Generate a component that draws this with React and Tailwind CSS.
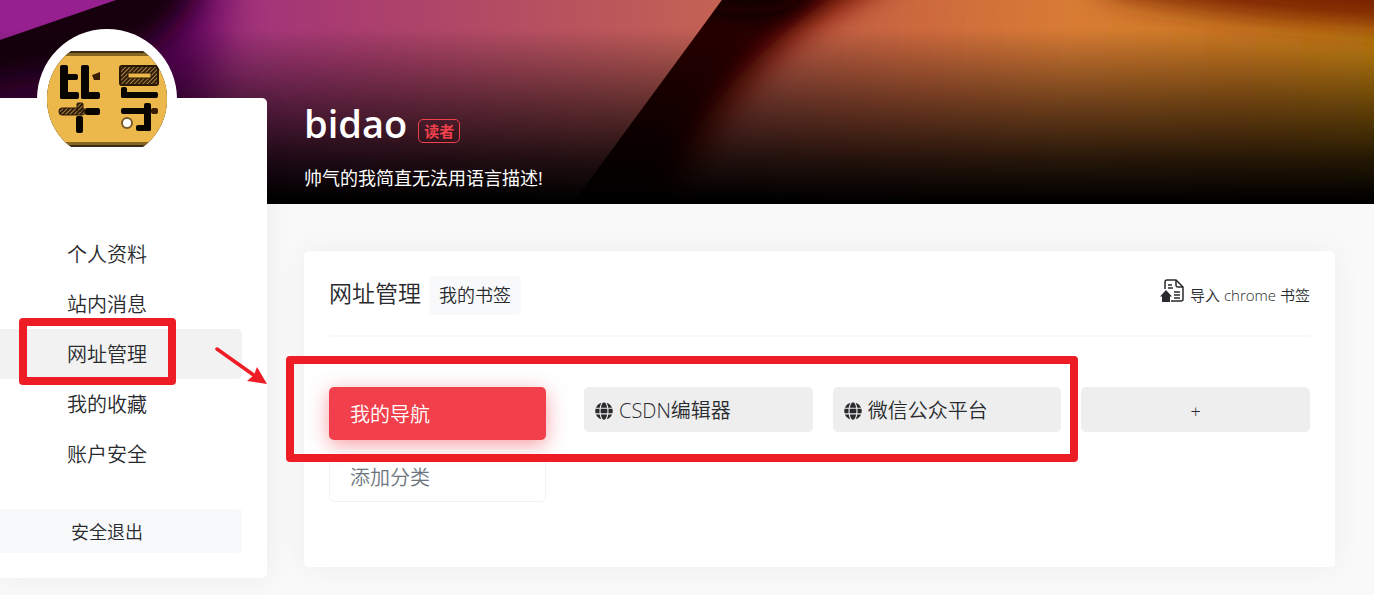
import React, { useState } from 'react';
import { FaGlobe } from 'react-icons/fa';

const menuItems = [
  { id: 'profile', label: '个人资料' },
  { id: 'messages', label: '站内消息' },
  { id: 'sites', label: '网址管理' },
  { id: 'favorites', label: '我的收藏' },
  { id: 'security', label: '账户安全' },
];

const sites = [
  { id: 1, name: 'CSDN编辑器' },
  { id: 2, name: '微信公众平台' },
];

const BannerArt = () => (
  <svg className="absolute inset-0 h-full w-full" viewBox="0 0 1374 204" preserveAspectRatio="none" aria-hidden="true">
    <defs>
      <linearGradient id="pink" gradientUnits="userSpaceOnUse" x1="200" y1="0" x2="720" y2="0">
        <stop offset="0" stopColor="#a03080" />
        <stop offset="0.3" stopColor="#aa3d6e" />
        <stop offset="0.65" stopColor="#b65060" />
        <stop offset="1" stopColor="#c46253" />
      </linearGradient>
      <linearGradient id="orange" gradientUnits="userSpaceOnUse" x1="760" y1="0" x2="1374" y2="60">
        <stop offset="0" stopColor="#b65848" />
        <stop offset="0.25" stopColor="#cc683e" />
        <stop offset="0.5" stopColor="#d87c34" />
        <stop offset="0.8" stopColor="#cc7a20" />
        <stop offset="1" stopColor="#c88410" />
      </linearGradient>
      <linearGradient id="fade" x1="0" y1="0" x2="0" y2="1">
        <stop offset="0.14" stopColor="#000" stopOpacity="0" />
        <stop offset="0.5" stopColor="#000" stopOpacity="0.48" />
        <stop offset="0.78" stopColor="#000" stopOpacity="0.82" />
        <stop offset="0.98" stopColor="#000" stopOpacity="1" />
      </linearGradient>
      <filter id="soft" x="-50%" y="-50%" width="200%" height="200%">
        <feGaussianBlur stdDeviation="14" />
      </filter>
      <filter id="softer" x="-50%" y="-50%" width="200%" height="200%">
        <feGaussianBlur stdDeviation="24" />
      </filter>
      <clipPath id="right">
        <polygon points="722,0 1374,0 1374,204 572,204" />
      </clipPath>
    </defs>
    <rect width="1374" height="204" fill="url(#pink)" />
    <path d="M-80 -60H225C220 20 215 60 200 110L170 240H-80Z" fill="#5c0058" filter="url(#softer)" />
    <path d="M-60 -60H205C195 20 165 45 100 70L-60 90Z" fill="#180008" filter="url(#soft)" />
    <polygon points="0,0 116,0 0,40" fill="#962090" />
    <g clipPath="url(#right)">
      <rect x="560" width="820" height="204" fill="#280000" />
      <path d="M900 -60C830 15 700 50 640 260H1450V-60Z" fill="#7a0800" filter="url(#soft)" />
      <path d="M960 -60C850 12 725 35 670 260H1450V-60Z" fill="url(#orange)" filter="url(#soft)" />
      <ellipse cx="750" cy="-8" rx="55" ry="22" fill="#080000" filter="url(#soft)" />
      <path d="M1060 -60L1110 -8C1200 14 1300 22 1420 30V-60Z" fill="#7a2400" filter="url(#soft)" />
    </g>
    <rect width="1374" height="204" fill="url(#fade)" />
  </svg>
);

const AvatarArt = () => (
  <svg className="h-[120px] w-[120px] rounded-full" viewBox="0 0 120 120" role="img" aria-label="bidao">
    <defs>
      <pattern id="hatch" width="3" height="3" patternUnits="userSpaceOnUse" patternTransform="rotate(45)">
        <rect width="3" height="3" fill="#2e1c08" />
        <rect width="1" height="3" fill="#a98142" />
      </pattern>
    </defs>
    <rect width="120" height="120" fill="#fff" />
    <rect y="12" width="120" height="96" fill="#3a2a18" />
    <rect y="14" width="120" height="92" fill="#86651f" />
    <rect y="17" width="120" height="86" fill="#ecb84c" />
    <g fill="#080400">
      <rect x="13" y="26" width="8" height="34" rx="2" />
      <rect x="13" y="53" width="19" height="7" rx="2" />
      <rect x="18" y="35" width="13" height="6" rx="2" />
      <rect x="34" y="26" width="8" height="34" rx="2" />
      <rect x="34" y="53" width="19" height="7" rx="2" />
      <path d="M45 36L48 35L53 33V41H47Z" fill="#3a1c06" />
      <rect x="38" y="69" width="15" height="7" rx="2" />
      <rect x="29" y="77" width="7" height="17" rx="2" />
      <rect x="74" y="48" width="6" height="11" rx="2" />
      <rect x="74" y="53" width="37" height="6" rx="2" />
      <rect x="74" y="69" width="30" height="6" rx="2" />
      <rect x="104" y="69" width="7" height="6" rx="2" fill="#3a1c06" />
      <rect x="97" y="64" width="7" height="28" rx="2" />
      <rect x="89" y="86" width="15" height="6" rx="2" />
    </g>
    <rect x="12" y="69" width="26" height="7" rx="3" fill="url(#hatch)" stroke="#2a1806" />
    <rect x="30" y="64" width="6" height="8" rx="1" fill="url(#hatch)" stroke="#2a1806" />
    <rect x="73" y="27" width="38" height="19" rx="2" fill="url(#hatch)" stroke="#2a1806" strokeWidth="2" />
    <rect x="81" y="34" width="23" height="5" fill="#ecb84c" stroke="#2a1806" />
    <circle cx="80" cy="84" r="5" fill="#fff" stroke="#7a5a2a" strokeWidth="2" />
  </svg>
);

const ImportIcon = () => (
  <svg className="h-6 w-6" viewBox="0 0 24 24" fill="none" stroke="currentColor" strokeWidth="1.5" aria-hidden="true">
    <path d="M5 10V3a2 2 0 0 1 2-2h9l7 7v12a2 2 0 0 1-2 2H11" />
    <path d="M16 1v5a2 2 0 0 0 2 2h5" />
    <path d="M8 6h4M8 9h5M14 13h6M14 16h6M14 19h6" strokeWidth="1.3" />
    <path d="M6 11L12 17.500H10V23H2V17.500H0Z" fill="currentColor" stroke="none" />
  </svg>
);

const Sidebar = ({ active, onSelect }) => (
  <aside className="relative z-10 -mt-[106px] flex w-[267px] shrink-0 flex-col rounded-r-[5px] bg-white pr-[25px] pb-[25px] shadow-[0_0_30px_rgba(0,0,0,0.06)]">
    <div className="-mt-[69px] mb-[60px] ml-[37px] h-[140px] w-[140px] rounded-full bg-white p-[10px]">
      <AvatarArt />
    </div>
    <nav className="mb-[30px]">
      {menuItems.map((item) => (
        <div key={item.id} className="relative">
          <a
            href={`#${item.id}`}
            onClick={() => onSelect(item.id)}
            className={`block rounded-r-[5px] pt-0.5 pr-7 text-center text-[20px] leading-[48px] ${
              active === item.id ? 'bg-[#f2f2f2]' : ''
            }`}
          >
            {item.label}
          </a>
          {item.id === 'sites' && (
            <>
              <div className="pointer-events-none absolute -top-[11px] left-[19px] z-10 h-[67px] w-[157px] rounded-[4px] border-8 border-[#ee1c24]" />
              <svg className="pointer-events-none absolute top-[15px] left-[212px] z-10 h-11 w-14" viewBox="0 0 56 44" aria-hidden="true">
                <line x1="5" y1="5" x2="43" y2="32" stroke="#ee1c24" strokeWidth="3.5" strokeLinecap="round" />
                <polygon points="55,40 45,23 42,31 35,37" fill="#ee1c24" />
              </svg>
            </>
          )}
        </div>
      ))}
    </nav>
    <button className="h-11 rounded-r-[4px] bg-[#f8f9fb] pt-0.5 pr-7 text-center text-[18px]">安全退出</button>
  </aside>
);

const App = () => {
  const [active, setActive] = useState('sites');

  return (
    <div className="min-h-screen bg-[#f9f9f9] font-['Open_Sans','Noto_Sans_CJK_SC',sans-serif] font-[350] text-[#282a2d]">
      <header className="relative h-[204px] overflow-hidden bg-black">
        <BannerArt />
        <div className="relative pt-[98px] pl-[304px] text-white">
          <div className="flex items-center gap-[11px]">
            <h1 className="text-[38px] leading-[50px] font-semibold">bidao</h1>
            <span className="mt-4 rounded-[5px] border border-[#f1404b] px-[5px] text-[15px] leading-[22px] font-bold text-[#f1404b]">
              读者
            </span>
          </div>
          <p className="mt-[18px] text-[18px] leading-6 font-normal">帅气的我简直无法用语言描述!</p>
        </div>
      </header>

      <div className="flex items-start pb-[17px]">
        <Sidebar active={active} onSelect={setActive} />

        <main className="mt-[47px] mr-[39px] ml-[37px] min-h-[316px] min-w-0 flex-1 rounded-[5px] bg-white p-[25px] shadow-[0_0_30px_rgba(0,0,0,0.05)]">
          <div className="flex items-start justify-between border-b-2 border-[#f8f9fa] pb-5">
            <div className="flex items-start gap-2">
              <h2 className="text-[23px] leading-[34px]">网址管理</h2>
              <button className="h-[39px] rounded-[4px] bg-[#f8f9fb] px-[10px] text-[18px]">我的书签</button>
            </div>
            <a href="#import" className="flex items-start gap-[6px] pt-[3px] text-[15px] leading-6">
              <ImportIcon />
              <span className="pt-1">导入 chrome 书签</span>
            </a>
          </div>

          <div className="relative mt-[50px] flex items-start gap-[38px]">
            <div className="flex w-[217px] shrink-0 flex-col gap-[10px] text-[20px]">
              <button className="h-[53px] rounded-[5px] bg-[#f1404b] px-[21px] pt-0.5 text-left text-white shadow-[0_5px_20px_rgba(241,64,75,0.5)]">
                我的导航
              </button>
              <button className="h-[52px] rounded-[5px] border border-[#f2f2f2] px-5 pt-1 text-left text-[#6c757d]">添加分类</button>
            </div>
            <div className="grid min-w-0 flex-1 grid-cols-3 gap-5">
              {sites.map((site) => (
                <a key={site.id} href={`#site-${site.id}`} className="flex h-[45px] items-center gap-[6px] rounded-[5px] bg-[#eee] px-[11px] pt-0.5 text-[20px]">
                  <FaGlobe className="h-[18px] w-[18px] shrink-0" />
                  <span className="truncate">{site.name}</span>
                </a>
              ))}
              <button className="h-[45px] rounded-[5px] bg-[#eee] pt-1 text-[18px]" aria-label="添加网址">
                +
              </button>
            </div>
            <div className="pointer-events-none absolute -top-[31px] right-[232px] -left-[43px] z-10 h-[106px] rounded-[4px] border-8 border-[#ee1c24]" />
          </div>
        </main>
      </div>
    </div>
  );
};

export default App;
